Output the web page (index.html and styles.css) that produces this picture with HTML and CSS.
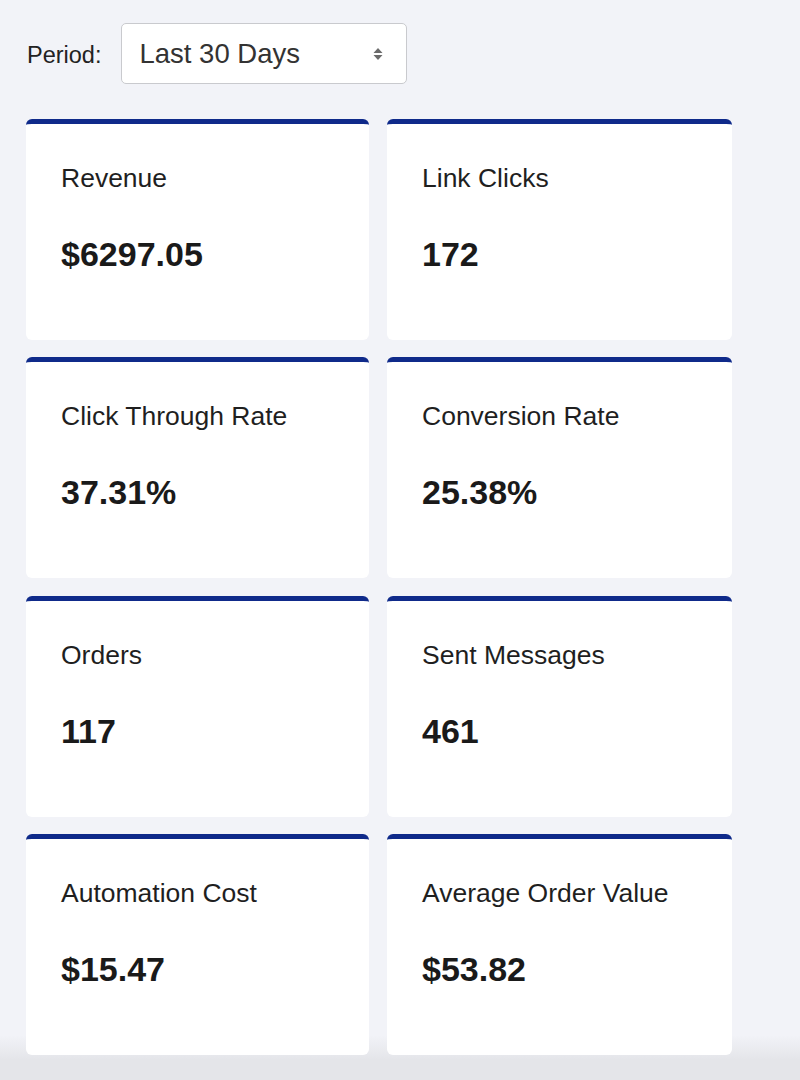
FILE: index.html
```html
<!DOCTYPE html>
<html lang="en">
<head>
<meta charset="utf-8">
<title>Automation Stats</title>
<link rel="stylesheet" href="styles.css">
</head>
<body>
<main class="page">
  <div class="filter">
    <label class="filter-label" for="period">Period:</label>
    <div class="select">
      <span class="select-value">Last 30 Days</span>
      <svg class="select-arrows" width="12" height="16" viewBox="0 0 12 16" aria-hidden="true">
        <path d="M6 2 L10.5 7 H1.5 Z" fill="#6b6b6b"/>
        <path d="M6 14 L10.5 9 H1.5 Z" fill="#6b6b6b"/>
      </svg>
    </div>
  </div>

  <section class="stats">
    <div class="card"><div class="card-label">Revenue</div><div class="card-value">$6297.05</div></div>
    <div class="card"><div class="card-label">Link Clicks</div><div class="card-value">172</div></div>
    <div class="card"><div class="card-label">Click Through Rate</div><div class="card-value">37.31%</div></div>
    <div class="card"><div class="card-label">Conversion Rate</div><div class="card-value">25.38%</div></div>
    <div class="card"><div class="card-label">Orders</div><div class="card-value">117</div></div>
    <div class="card"><div class="card-label">Sent Messages</div><div class="card-value">461</div></div>
    <div class="card"><div class="card-label">Automation Cost</div><div class="card-value">$15.47</div></div>
    <div class="card"><div class="card-label">Average Order Value</div><div class="card-value">$53.82</div></div>
  </section>
</main>
</body>
</html>
```
FILE: styles.css
```css
* { box-sizing: border-box; }

html, body {
  margin: 0;
  padding: 0;
}

body {
  min-height: 1080px;
  background: linear-gradient(to bottom, #f2f3f8 0, #f2f3f8 1035px, #e4e5e9 1060px, #e4e5e9 100%);
  font-family: "Liberation Sans", Arial, sans-serif;
  color: #1f1f1f;
}

.page {
  padding: 23px 0 0 26px;
}

.filter {
  display: flex;
  align-items: center;
  gap: 20px;
  margin-left: 1px;
}

.filter-label {
  font-size: 23.5px;
  color: #222;
  margin-top: 3px;
}

.select {
  width: 286px;
  height: 61px;
  background: #fff;
  border: 1px solid #c9cace;
  border-radius: 5px;
  display: flex;
  align-items: center;
  justify-content: space-between;
  padding: 0 22px 0 17px;
}

.select-value {
  font-size: 27.5px;
  color: #333;
}

.stats {
  margin-top: 35px;
  display: grid;
  grid-template-columns: 343px 345px;
  column-gap: 18px;
  row-gap: 17.33px;
}

.card {
  height: 221px;
  background: #fff;
  border-top: 5px solid #0f2a8a;
  border-radius: 6px;
  padding: 39px 20px 0 35px;
}

.card-label {
  font-size: 26.5px;
  line-height: 30px;
  color: #1f1f1f;
}

.card-value {
  margin-top: 41px;
  font-size: 34px;
  line-height: 40px;
  font-weight: 700;
  color: #1a1a1a;
}
```
